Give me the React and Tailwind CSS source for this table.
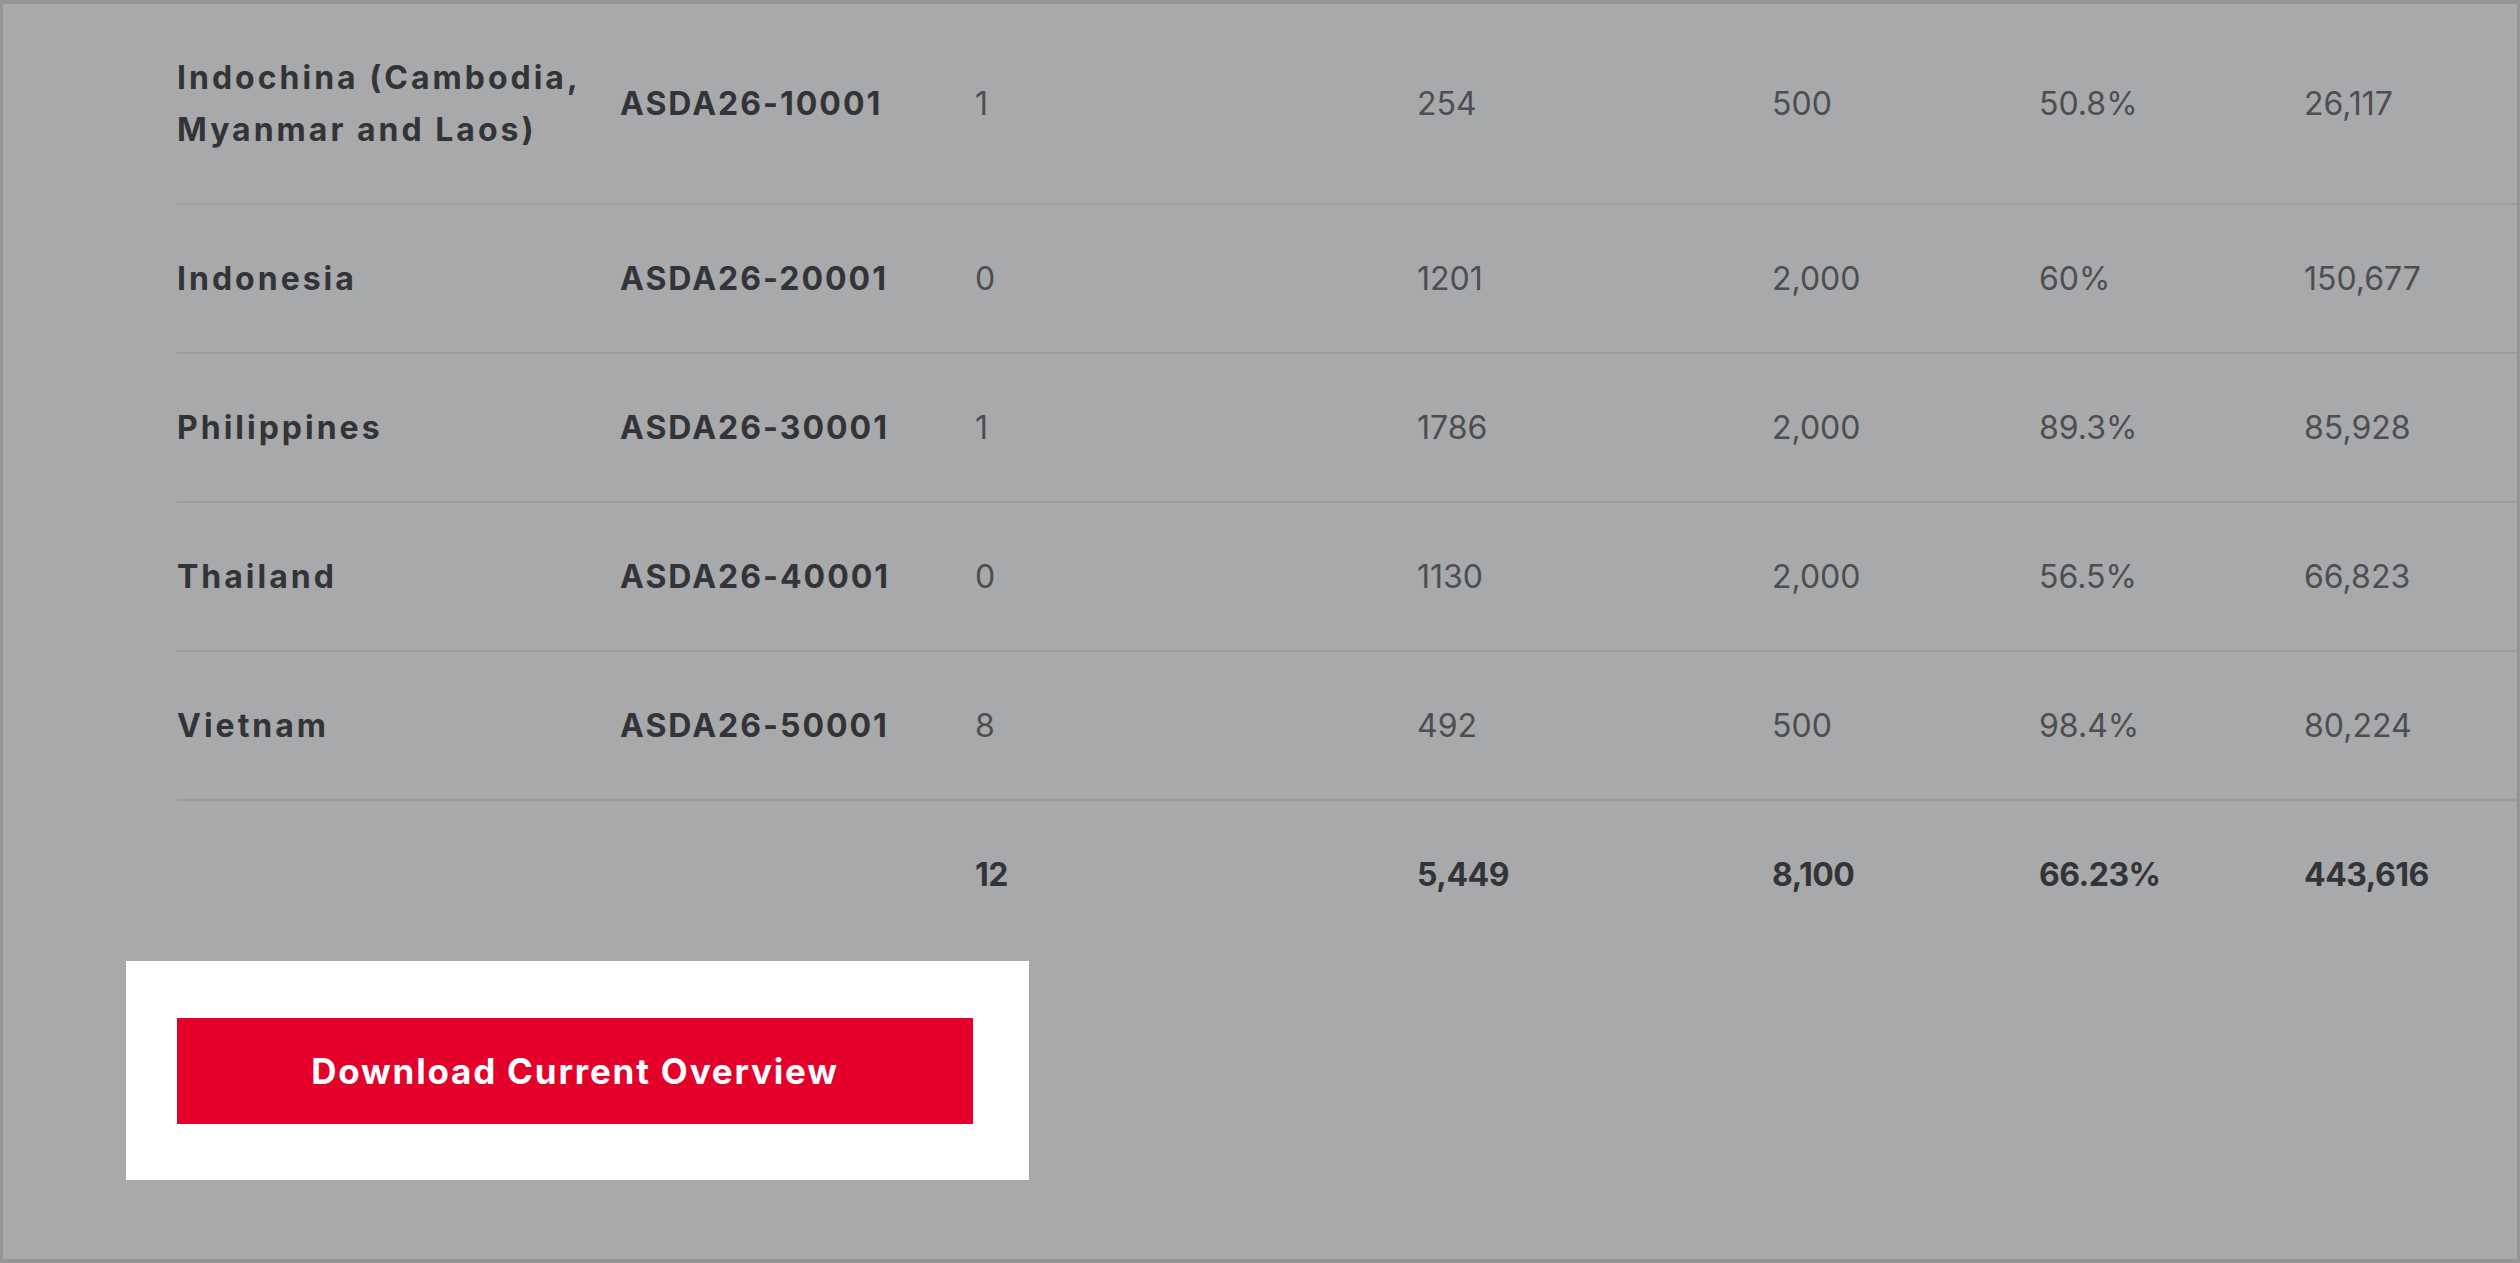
import React from 'react';

const rows = [
    { region: 'Indochina (Cambodia, Myanmar and Laos)', code: 'ASDA26-10001', open: '1', used: '254', quota: '500', pct: '50.8%', total: '26,117' },
    { region: 'Indonesia', code: 'ASDA26-20001', open: '0', used: '1201', quota: '2,000', pct: '60%', total: '150,677' },
    { region: 'Philippines', code: 'ASDA26-30001', open: '1', used: '1786', quota: '2,000', pct: '89.3%', total: '85,928' },
    { region: 'Thailand', code: 'ASDA26-40001', open: '0', used: '1130', quota: '2,000', pct: '56.5%', total: '66,823' },
    { region: 'Vietnam', code: 'ASDA26-50001', open: '8', used: '492', quota: '500', pct: '98.4%', total: '80,224' },
];

const grid = 'grid grid-cols-[443px_355px_442px_355px_267px_265px_1fr] items-center py-[47.5px] leading-[52px]';

export default function App() {
    return (
        <div
            className="h-[1263px] w-[2520px] overflow-hidden bg-[#a8a9ab] border-t-[4px] border-l-[3px] border-r-[3px] border-b-[4px] border-[#949597] pl-[174px] text-[32px]"
            style={{ fontFamily: 'Inter, "Open Sans", sans-serif' }}
        >
            <div>
                {rows.map((row) => (
                    <div key={row.code} className={`${grid} border-b-2 border-[#9b9c9e]`}>
                        <div className="pr-[20px] font-bold tracking-[3px] text-[#333437]">{row.region}</div>
                        <div className="font-bold tracking-[2px] text-[#333437]">{row.code}</div>
                        <div className="text-[#4d4e51]">{row.open}</div>
                        <div className="text-[#4d4e51]">{row.used}</div>
                        <div className="text-[#4d4e51]">{row.quota}</div>
                        <div className="text-[#4d4e51]">{row.pct}</div>
                        <div className="text-[#4d4e51]">{row.total}</div>
                    </div>
                ))}
                <div className={`${grid} font-bold tracking-[-0.5px] text-[#333437]`}>
                    <div></div>
                    <div></div>
                    <div>12</div>
                    <div>5,449</div>
                    <div>8,100</div>
                    <div>66.23%</div>
                    <div>443,616</div>
                </div>
            </div>

            <div className="mt-[13px] -ml-[51px] w-[903px] h-[219px] bg-white pl-[51px] pt-[57px]">
                <button className="w-[796px] h-[106px] bg-[#e4002b] text-white text-[35px] font-bold tracking-[1.8px]">
                    Download Current Overview
                </button>
            </div>
        </div>
    );
}
